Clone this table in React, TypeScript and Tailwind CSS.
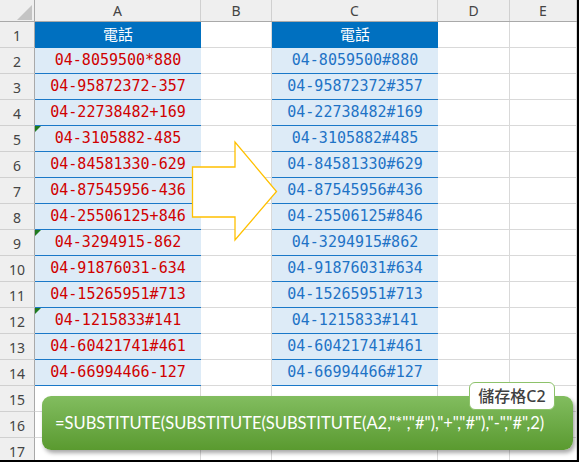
import React from "react"

const colA = [
  "04-8059500*880",
  "04-95872372-357",
  "04-22738482+169",
  "04-3105882-485",
  "04-84581330-629",
  "04-87545956-436",
  "04-25506125+846",
  "04-3294915-862",
  "04-91876031-634",
  "04-15265951#713",
  "04-1215833#141",
  "04-60421741#461",
  "04-66994466-127",
]

// rows that carry the little green error mark in column A
const flagged = [3, 7, 10]

const mono = { fontFamily: '"DejaVu Sans Mono", "Liberation Mono", monospace' }
const sans = { fontFamily: '"Noto Sans", "Noto Sans CJK TC", sans-serif' }

function HeaderRow() {
  const cols = [
    { label: "A", w: "w-[166px]" },
    { label: "B", w: "w-[71px]" },
    { label: "C", w: "w-[166px]" },
    { label: "D", w: "w-[72px]" },
    { label: "E", w: "w-[67px]" },
  ]
  return (
    <div className="flex h-[22px] border-b border-[#a9a9a9] bg-[#efefef]">
      <div className="relative w-[35px] border-r border-[#a9a9a9]">
        <svg className="absolute left-[17px] top-[5px]" width="15" height="15" viewBox="0 0 15 15">
          <polygon points="15,0 15,15 0,15" fill="#c4c4c4" />
        </svg>
      </div>
      {cols.map((c) => (
        <div
          key={c.label}
          className={`${c.w} flex items-center justify-center border-r border-[#d0d0d0] text-[14px] text-[#444]`}
          style={sans}
        >
          {c.label}
        </div>
      ))}
    </div>
  )
}

function RowHead({ n }: { n: number }) {
  return (
    <div
      className="flex w-[35px] items-center justify-center border-r border-b border-r-[#a9a9a9] border-b-[#d0d0d0] bg-[#efefef] pt-[2px] text-[14px] text-[#444]"
      style={sans}
    >
      {n}
    </div>
  )
}

function Blank({ w }: { w: string }) {
  return <div className={`${w} border-r border-b border-[#d9d9d9] bg-white`} />
}

function Title() {
  return (
    <div
      className="flex w-[166px] items-center justify-center border-b border-[#0070c0] bg-[#0070c0] text-[15px] text-white"
      style={sans}
    >
      電話
    </div>
  )
}

function Phone({ text, tone, flag }: { text: string; tone: "red" | "blue"; flag?: boolean }) {
  return (
    <div
      className={`relative flex w-[166px] items-center justify-center border-b border-[#1a78c8] bg-[#ddebf7] text-[15px] ${
        tone === "red" ? "text-[#d00000]" : "text-[#1f73c6]"
      }`}
      style={mono}
    >
      {flag && (
        <svg className="absolute left-0 top-0" width="6" height="6" viewBox="0 0 6 6">
          <polygon points="0,0 6,0 0,6" fill="#1f7a1f" />
        </svg>
      )}
      {text}
    </div>
  )
}

export default function App() {
  const rows = Array.from({ length: 17 }, (_, i) => i + 1)

  return (
    <div className="relative h-[462px] w-[579px] overflow-hidden border-r-2 border-b-2 border-black bg-white">
      <HeaderRow />
      {rows.map((n) => {
        const idx = n - 2
        const hasData = n >= 2 && n <= 14
        return (
          <div key={n} className="flex h-[26px]">
            <RowHead n={n} />
            {n === 1 ? (
              <Title />
            ) : hasData ? (
              <Phone text={colA[idx]} tone="red" flag={flagged.includes(idx)} />
            ) : (
              <Blank w="w-[166px]" />
            )}
            <Blank w="w-[71px]" />
            {n === 1 ? (
              <Title />
            ) : hasData ? (
              <Phone text={colA[idx].replace(/[*+]/, "#").replace(/-(?=\d+$)/, "#")} tone="blue" />
            ) : (
              <Blank w="w-[166px]" />
            )}
            <Blank w="w-[72px]" />
            <Blank w="w-[67px]" />
          </div>
        )
      })}

      {/* big arrow between the two columns */}
      <svg className="absolute left-[190px] top-[140px]" width="90" height="102" viewBox="0 0 90 102">
        <polygon
          points="2.5,27 45,27 45,2 86.5,51.5 45,100 45,77 2.5,77"
          fill="#fff"
          stroke="#ffc000"
          strokeWidth="1.3"
        />
      </svg>

      {/* formula callout */}
      <div
        className="absolute left-[42px] top-[396px] flex h-[54px] w-[531px] items-center rounded-[9px] bg-gradient-to-b from-[#82bd5f] to-[#5a9a2f] pl-[13px] text-[16.5px] text-white shadow-[2px_3px_4px_rgba(0,0,0,0.35)]"
        style={{ fontFamily: 'Lato, "Noto Sans", sans-serif' }}
      >
        {'=SUBSTITUTE(SUBSTITUTE(SUBSTITUTE(A2,"*","#"),"+","#"),"-","#",2)'}
      </div>
      <div
        className="absolute left-[469px] top-[382px] flex h-[28px] w-[86px] items-center justify-center rounded-[6px] border border-[#8dc26a] bg-white text-[16px] font-medium text-[#404040]"
        style={sans}
      >
        儲存格C2
      </div>
    </div>
  )
}
